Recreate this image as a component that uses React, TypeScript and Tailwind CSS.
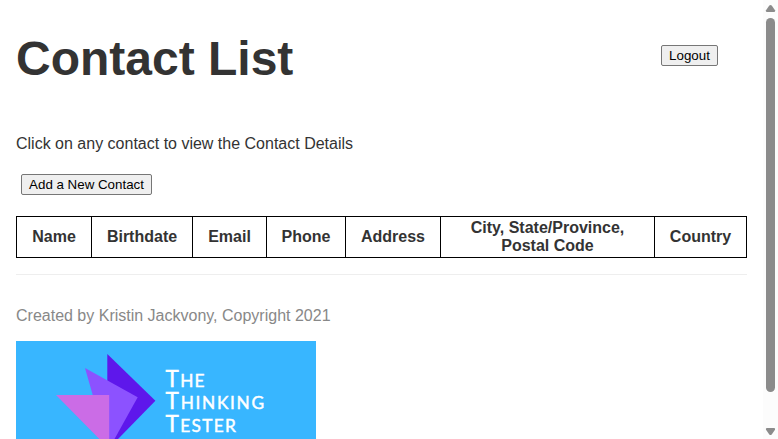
const columns = [
  { label: 'Name', width: 'w-[75px]' },
  { label: 'Birthdate', width: 'w-[101px]' },
  { label: 'Email', width: 'w-[74px]' },
  { label: 'Phone', width: 'w-[79px]' },
  { label: 'Address', width: 'w-[95px]' },
  { label: 'City, State/Province, Postal Code', width: 'w-[214px]' },
  { label: 'Country', width: 'w-[92px]' },
];

const buttonStyle =
  'h-[21px] rounded-[2px] border border-[#767676] bg-[#efefef] text-center text-[13.333px] leading-[19px] whitespace-nowrap text-black';

function Logo() {
  return (
    <svg className="block h-[150px] w-[300px] shrink-0" viewBox="0 0 300 150" role="img" aria-label="The Thinking Tester">
      <rect width="300" height="150" fill="#38b6ff" />
      <path d="M91.3 13L139.4 59.7L91.3 109Z" fill="#5e17eb" />
      <path d="M69 27L121.7 56.3L92.4 109Z" fill="#8c52ff" />
      <path d="M40 54H93.2V108Z" fill="#cb6ce6" />
      <g fill="white" stroke="white" strokeWidth="0.45" fontFamily="Lato, sans-serif" fontSize="17.3">
        <text x="149.6" y="45.7" textLength="39" lengthAdjust="spacing"><tspan fontSize="22.6">T</tspan>HE</text>
        <text x="149.6" y="68.2" textLength="98.5" lengthAdjust="spacing"><tspan fontSize="22.6">T</tspan>HINKING</text>
        <text x="149.6" y="90.7" textLength="70.3" lengthAdjust="spacing"><tspan fontSize="22.6">T</tspan>ESTER</text>
      </g>
    </svg>
  );
}

function Scrollbar() {
  return (
    <div className="flex w-[15px] flex-col items-center bg-[#fcfcfc]">
      <svg className="h-[18px] w-[15px] shrink-0" viewBox="0 0 15 18">
        <path d="M6.3 5.6Q7.5 4.2 8.7 5.6L12 10.2Q12.5 12 11.2 12H3.8Q2.5 12 3 10.2Z" fill="#8b8b8b" />
      </svg>
      <div className="h-[374px] w-[9px] rounded-full bg-[#8b8b8b]" />
      <div className="flex-1" />
      <svg className="h-[15px] w-[15px] shrink-0" viewBox="0 0 15 15">
        <path d="M3.8 4H11.2Q12.5 4 12 5.8L8.7 10.4Q7.5 11.8 6.3 10.4L3 5.8Q2.5 4 3.8 4Z" fill="#8b8b8b" />
      </svg>
    </div>
  );
}

export default function App() {
  return (
    <div className="flex h-[439px] w-[778px] overflow-hidden bg-white font-['Liberation_Sans',Arial,sans-serif] text-base text-[#333]">
      <main className="min-w-0 flex-1 pr-4 pl-4">
        <header className="flex items-start justify-between pt-[31px]">
          <h1 className="text-[48px] leading-[55px] font-bold">Contact List</h1>
          <button className={`${buttonStyle} mt-[14px] mr-[29px] w-[57px]`}>Logout</button>
        </header>
        <p className="mt-[49px] leading-[18px]">Click on any contact to view the Contact Details</p>
        <button className={`${buttonStyle} mt-[21px] ml-[5px] block w-[131px]`}>Add a New Contact</button>
        <table className="mt-[21px] h-[42px] w-[731px] table-fixed border-collapse border border-black leading-[18px]">
          <thead>
            <tr>
              {columns.map(({ label, width }) => (
                <th key={label} className={`${width} border border-black px-[14px] py-0 text-center font-bold`}>
                  {label}
                </th>
              ))}
            </tr>
          </thead>
        </table>
        <hr className="mt-4 w-[731px] border-[#eee]" />
        <footer>
          <p className="mt-8 mb-[16px] leading-[18px] text-[#888]">Created by Kristin Jackvony, Copyright 2021</p>
          <Logo />
        </footer>
      </main>
      <Scrollbar />
    </div>
  );
}
